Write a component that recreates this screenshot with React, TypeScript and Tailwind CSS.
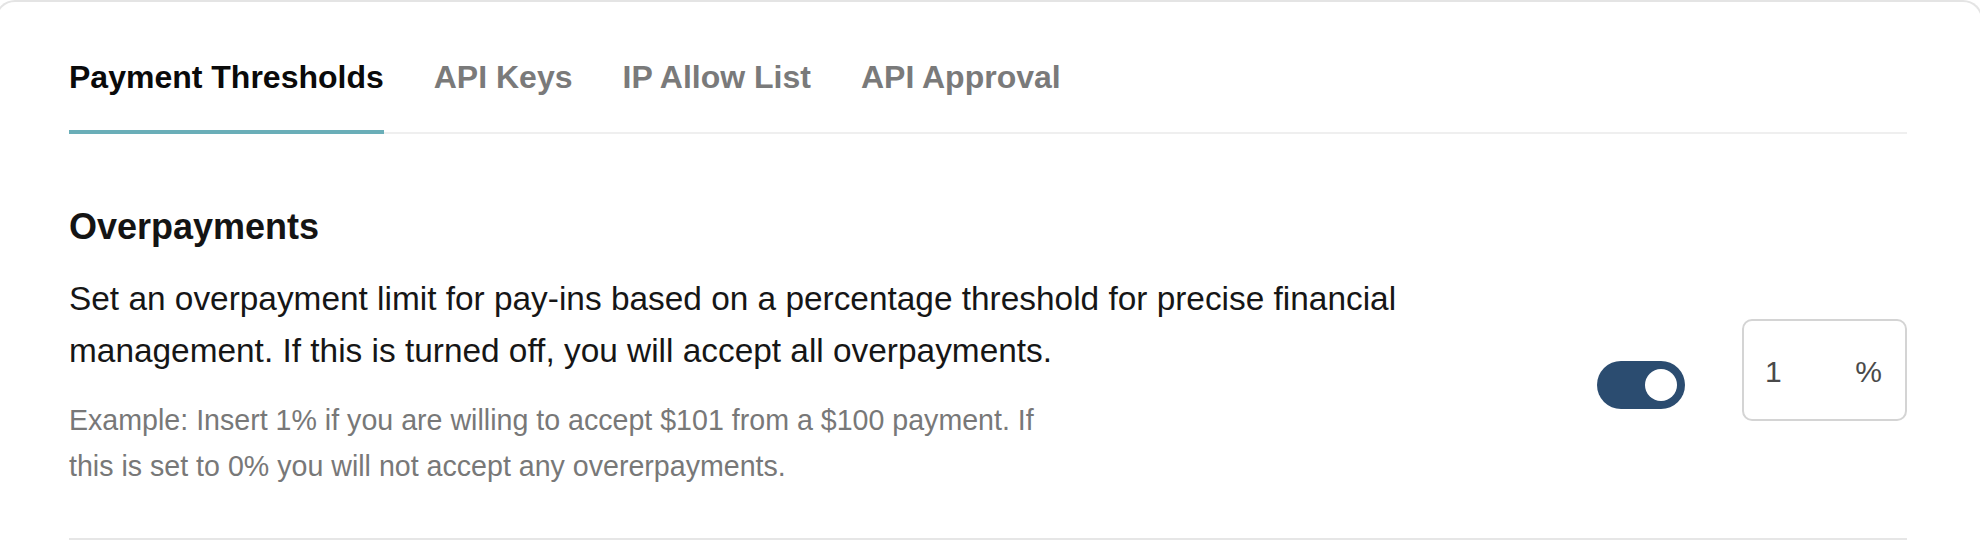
import { useState } from 'react';

const tabs = ['Payment Thresholds', 'API Keys', 'IP Allow List', 'API Approval'];

const Toggle = ({
  checked,
  onChange,
}: {
  checked: boolean;
  onChange: (v: boolean) => void;
}) => (
  <button
    type="button"
    role="switch"
    aria-checked={checked}
    onClick={() => onChange(!checked)}
    className={`mt-2 flex h-[48px] w-[88px] shrink-0 items-center rounded-full p-2 ${
      checked ? 'justify-end bg-[#2b4c70]' : 'justify-start bg-[#c9c9c9]'
    }`}
  >
    <span className="block size-8 rounded-full bg-white" />
  </button>
);

const App = () => {
  const [activeTab, setActiveTab] = useState(tabs[0]);
  const [enabled, setEnabled] = useState(true);
  const [percent, setPercent] = useState('1');

  return (
    <div className="min-h-screen overflow-hidden bg-white font-['Liberation_Sans',Arial,sans-serif]">
      <section className="-ml-[5px] -mr-[3px] rounded-t-[20px] border-2 border-b-0 border-[#e4e4e4] pl-[72px] pr-[74px] pt-[55px]">
        <nav className="flex gap-[50px] border-b-2 border-[#efefef]">
          {tabs.map((tab) => (
            <button
              key={tab}
              type="button"
              onClick={() => setActiveTab(tab)}
              className={`-mb-[2px] border-b-4 pb-[33px] text-[32px] font-bold leading-[40px] ${
                activeTab === tab
                  ? 'border-[#6aaeb8] text-[#0a0a0a]'
                  : 'border-transparent text-[#7a7a7a]'
              }`}
            >
              {tab}
            </button>
          ))}
        </nav>

        <div className="border-b-2 border-[#e6e6e6] pt-[71px] pb-[49px]">
          <h2 className="text-[36px] font-bold leading-[44px] text-[#141414]">
            Overpayments
          </h2>

          <div className="mt-[24px] flex items-center gap-[64px]">
            <div className="min-w-0 flex-1">
              <p className="text-[33.4px] leading-[52px] text-[#161616]">
                Set an overpayment limit for pay-ins based on a percentage
                threshold for precise financial management. If this is turned
                off, you will accept all overpayments.
              </p>
              <p className="mt-[20px] max-w-[995px] text-[28.6px] leading-[46px] text-[#787878]">
                Example: Insert 1% if you are willing to accept $101 from a $100
                payment. If this is set to 0% you will not accept any
                overerpayments.
              </p>
            </div>

            <div className="flex items-center gap-[57px]">
              <Toggle checked={enabled} onChange={setEnabled} />
              <label className="mb-[22px] flex h-[102px] w-[165px] items-center rounded-[10px] border-2 border-[#d4d4d4] pl-[21px] pr-[23px] pt-[4px] text-[30px] leading-[36px] text-[#4a4a4a]">
                <input
                  type="text"
                  value={percent}
                  onChange={(e) => setPercent(e.target.value)}
                  className="w-full min-w-0 bg-transparent outline-none"
                />
                <span>%</span>
              </label>
            </div>
          </div>
        </div>
      </section>
    </div>
  );
};

export default App;
